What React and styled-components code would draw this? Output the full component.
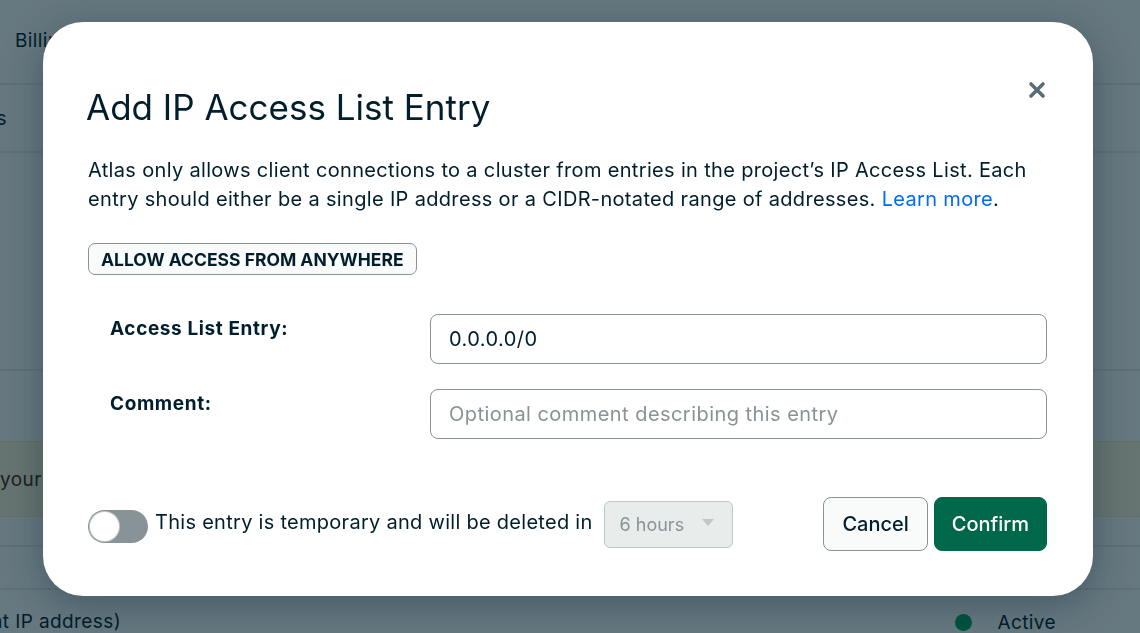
import React, { useState } from "react";
import styled, { createGlobalStyle } from "styled-components";

const GlobalStyle = createGlobalStyle`
  html, body {
    margin: 0;
    padding: 0;
    background: #ffffff;
    font-family: "Inter", "Lato", sans-serif;
    color: #001e2b;
    overflow: hidden;
  }
  * { box-sizing: border-box; }
`;

function CloseIcon() {
  return (
    <svg width="18" height="18" viewBox="0 0 18 18">
      <path
        d="M3 3 L15 15 M15 3 L3 15"
        stroke="#5c6c75"
        strokeWidth="3.6"
        strokeLinecap="round"
      />
    </svg>
  );
}

function App() {
  const [temporary, setTemporary] = useState(false);
  return (
    <>
      <GlobalStyle />
      <Page>
        <TopNav>
          <NavItem>Billing</NavItem>
        </TopNav>
        <Tabs>
          <Clip width={7}>
            <span>Settings</span>
          </Clip>
        </Tabs>
        <Section height={218} />
        <Section height={72} />
        <Banner>your current IP address is not in the access list</Banner>
        <Section height={30} />
        <Section height={43} />
        <TableRow>
          <Clip width={121}>
            <span>0.0.0.0/0 (includes your current IP address)</span>
          </Clip>
          <Status>
            <Dot />
            Active
          </Status>
        </TableRow>
      </Page>

      <Overlay>
        <Modal>
          <CloseButton aria-label="Close">
            <CloseIcon />
          </CloseButton>
          <Title>Add IP Access List Entry</Title>
          <Description>
            Atlas only allows client connections to a cluster from entries in
            the project’s IP Access List. Each entry should either be a single
            IP address or a CIDR-notated range of addresses.{" "}
            <Link href="#">Learn more</Link>.
          </Description>
          <OutlineButton>ALLOW ACCESS FROM ANYWHERE</OutlineButton>

          <Form>
            <Label>Access List Entry:</Label>
            <Input defaultValue="0.0.0.0/0" />
            <Label>Comment:</Label>
            <Input placeholder="Optional comment describing this entry" />
          </Form>

          <Footer>
            <Temporary>
              <Toggle
                on={temporary}
                onClick={() => setTemporary(!temporary)}
              >
                <Knob on={temporary} />
              </Toggle>
              <FooterText>This entry is temporary and will be deleted in</FooterText>
              <Select>
                6 hours
                <Caret />
              </Select>
            </Temporary>
            <Actions>
              <Button>Cancel</Button>
              <Button primary>Confirm</Button>
            </Actions>
          </Footer>
        </Modal>
      </Overlay>
    </>
  );
}

export default App;

const Page = styled.div`
  width: 1140px;
  height: 633px;
  display: flex;
  flex-direction: column;
  font-size: 19px;
  letter-spacing: 0.4px;
`;

const TopNav = styled.div`
  height: 85px;
  display: flex;
  align-items: flex-start;
  padding: 29px 15px 0;
  border-bottom: 2px solid #e8edeb;
`;

const NavItem = styled.span`
  font-size: 19px;
`;

const Tabs = styled.div`
  height: 68px;
  display: flex;
  align-items: center;
  border-bottom: 2px solid #e8edeb;
`;

const Clip = styled.div`
  width: ${(p) => p.width}px;
  flex-shrink: 0;
  display: flex;
  justify-content: flex-end;
  white-space: nowrap;
`;

const Section = styled.div`
  height: ${(p) => p.height}px;
  flex-shrink: 0;
  border-bottom: 2px solid #e8edeb;
`;

const Banner = styled.div`
  height: 76px;
  flex-shrink: 0;
  display: flex;
  align-items: center;
  background: #fef7db;
  border-top: 1px solid #ffec9e;
  border-bottom: 1px solid #ffec9e;
  color: #4c2100;
  margin-top: -2px;
`;

const TableRow = styled.div`
  flex: 1;
  display: flex;
  align-items: flex-end;
  justify-content: space-between;
  padding: 0 84px 0 0;
`;

const Status = styled.div`
  display: flex;
  align-items: center;
  gap: 25px;
  margin-bottom: -1px;
`;

const Dot = styled.span`
  width: 17px;
  height: 17px;
  border-radius: 50%;
  background: #00a35c;
`;

const Overlay = styled.div`
  position: fixed;
  inset: 0;
  background: rgba(0, 30, 43, 0.6);
  display: flex;
  align-items: flex-start;
  justify-content: center;
  padding-top: 22px;
`;

const Modal = styled.div`
  position: relative;
  width: 1050px;
  height: 574px;
  margin-right: 4px;
  background: #ffffff;
  border-radius: 40px;
  padding: 62px 46px 45px 45px;
  box-shadow: 0 8px 40px rgba(0, 30, 43, 0.35);
  display: flex;
  flex-direction: column;
`;

const CloseButton = styled.button`
  position: absolute;
  top: 59px;
  right: 47px;
  width: 18px;
  height: 18px;
  padding: 0;
  border: none;
  background: none;
  cursor: pointer;
  display: flex;
`;

const Title = styled.h2`
  margin: 0;
  font-size: 35px;
  line-height: 46px;
  font-weight: 400;
  color: #001e2b;
  letter-spacing: 0;
  margin-left: -2px;
`;

const Description = styled.p`
  margin: 26px 0 0;
  font-size: 20px;
  line-height: 29px;
  letter-spacing: 0.33px;
  color: #001e2b;
`;

const Link = styled.a`
  color: #016bf8;
  text-decoration: none;
`;

const OutlineButton = styled.button`
  align-self: flex-start;
  margin-top: 29px;
  height: 32px;
  padding: 0 12px;
  border: 1px solid #889397;
  border-radius: 7px;
  background: #f9fbfa;
  color: #001e2b;
  font-family: inherit;
  font-size: 17.5px;
  font-weight: 700;
  cursor: pointer;
`;

const Form = styled.div`
  display: grid;
  grid-template-columns: 342px 1fr;
  row-gap: 25px;
  margin-top: 39px;
`;

const Label = styled.label`
  padding-left: 22px;
  font-size: 19px;
  font-weight: 700;
  letter-spacing: 0.6px;
  line-height: 29px;
`;

const Input = styled.input`
  height: 50px;
  width: 100%;
  border: 1px solid #889397;
  border-radius: 8px;
  padding: 0 18px;
  font-family: inherit;
  font-size: 20px;
  letter-spacing: 0.45px;
  color: #001e2b;
  outline: none;
  &::placeholder {
    color: #889397;
  }
`;

const Footer = styled.div`
  margin-top: 58px;
  display: flex;
  align-items: center;
  justify-content: space-between;
  height: 54px;
`;

const Temporary = styled.div`
  display: flex;
  align-items: center;
`;

const Toggle = styled.div`
  width: 60px;
  height: 33px;
  border-radius: 17px;
  background: ${(p) => (p.on ? "#00684a" : "#889397")};
  position: relative;
  cursor: pointer;
  flex-shrink: 0;
  margin-top: 4px;
`;

const Knob = styled.span`
  position: absolute;
  top: 2px;
  left: ${(p) => (p.on ? "29px" : "2px")};
  width: 29px;
  height: 29px;
  border-radius: 50%;
  background: #ffffff;
  box-shadow: 0 0 0 1px #c1c7c6;
`;

const FooterText = styled.span`
  margin-left: 7px;
  font-size: 20px;
  letter-spacing: 0.28px;
  line-height: 24px;
  margin-bottom: 4px;
`;

const Select = styled.div`
  margin-left: 11px;
  width: 129px;
  height: 47px;
  display: flex;
  align-items: center;
  justify-content: space-between;
  padding: 0 18px 0 15px;
  background: #e8edeb;
  border: 1px solid #c1c7c6;
  border-radius: 6px;
  color: #889397;
  font-size: 18px;
`;

const Caret = styled.span`
  width: 0;
  height: 0;
  border-left: 6px solid transparent;
  border-right: 6px solid transparent;
  border-top: 7px solid #c1c7c6;
  margin-top: -4px;
`;

const Actions = styled.div`
  display: flex;
  gap: 6px;
`;

const Button = styled.button`
  height: 54px;
  padding: 0 ${(p) => (p.primary ? "17px" : "18px")};
  border-radius: 8px;
  border: 1px solid ${(p) => (p.primary ? "#00684a" : "#889397")};
  background: ${(p) => (p.primary ? "#00684a" : "#f9fbfa")};
  color: ${(p) => (p.primary ? "#ffffff" : "#001e2b")};
  font-family: inherit;
  font-size: 20px;
  font-weight: 500;
  cursor: pointer;
`;
